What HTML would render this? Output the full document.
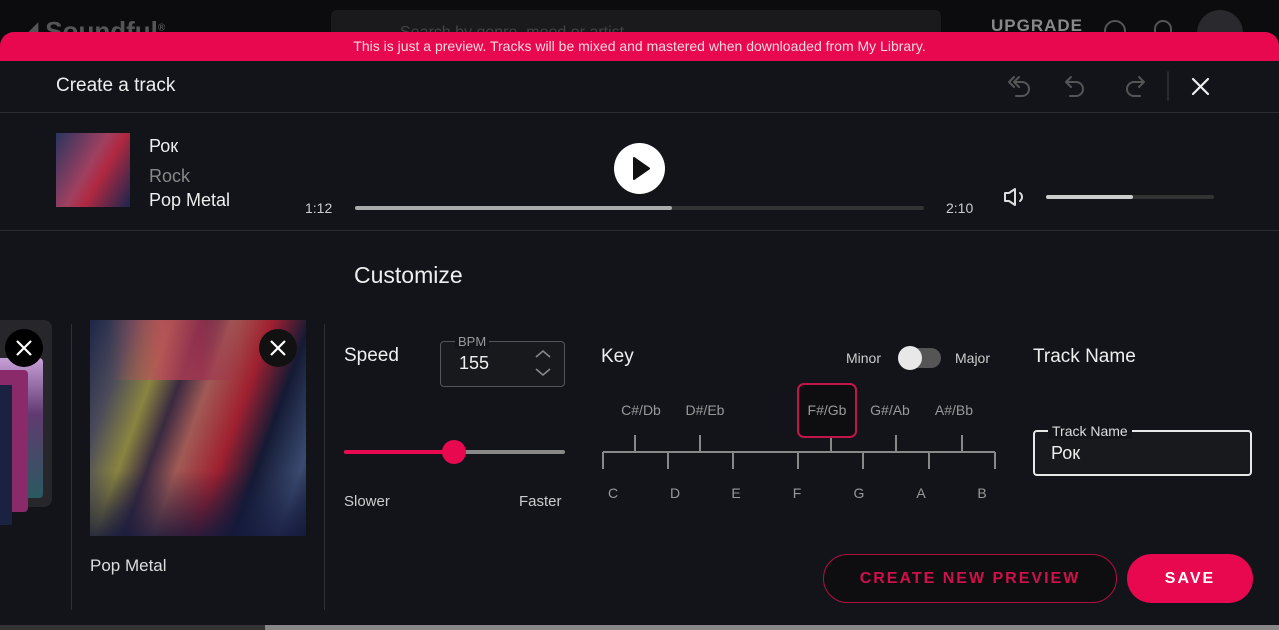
<!DOCTYPE html>
<html><head><meta charset="utf-8"><style>
*{margin:0;padding:0;box-sizing:border-box}
html,body{width:1279px;height:630px;overflow:hidden}
body{background:#0c0c0f;font-family:"Liberation Sans",sans-serif;position:relative;color:#fff}
.a{position:absolute}
</style></head><body>
<div class="a" style="left:18px;top:16px;font-size:26px;font-weight:bold;color:#555;">&#9698; Soundful<sup style="font-size:10px">®</sup></div>
<div class="a" style="left:331px;top:10px;width:610px;height:40px;background:#1a1a1d;border-radius:6px"></div>
<div class="a" style="left:400px;top:24px;font-size:16px;color:#444">Search by genre, mood or artist</div>
<div class="a" style="left:991px;top:16px;font-size:17px;font-weight:bold;color:#888;letter-spacing:1px">UPGRADE</div>
<div class="a" style="left:1104px;top:20px;width:22px;height:22px;border-radius:50%;border:2px solid #555"></div>
<div class="a" style="left:1154px;top:20px;width:18px;height:20px;border-radius:9px 9px 2px 2px;border:2px solid #555"></div>
<div class="a" style="left:1197px;top:10px;width:46px;height:46px;border-radius:50%;background:#2a2a2e"></div>
<div class="a" style="left:0;top:32px;width:1279px;height:600px;background:#131419;border-radius:14px 14px 0 0;overflow:hidden">
  <div class="a" style="left:0;top:0;width:1279px;height:29px;background:#e8084f;text-align:center;font-size:14px;line-height:28px;color:#fbd7e2">This is just a preview. Tracks will be mixed and mastered when downloaded from My Library.</div>
</div>
<div class="a" style="left:56px;top:75px;font-size:19px;color:#eee">Create a track</div>
<svg class="a" style="left:1000px;top:70px" width="220" height="32" viewBox="0 0 220 32" fill="none" stroke-linecap="round" stroke-linejoin="round">
 <g stroke="#555" stroke-width="2">
  <path d="M14 7l-5 5 5 5M19 7l-5 5 5 5M14 12h8a7 7 0 010 14h-6"/>
  <path d="M71 7l-5 5 5 5M66 12h10a7 7 0 010 14h-6"/>
  <path d="M139 7l5 5-5 5M144 12h-10a7 7 0 000 14h6"/>
 </g>
 <path d="M168 2v28" stroke="#333" stroke-width="1.5"/>
 <path d="M193 9l15 15M208 9l-15 15" stroke="#eee" stroke-width="2.2"/>
</svg>
<div class="a" style="left:0;top:112px;width:1279px;height:1px;background:#2a2b30"></div>
<div class="a" style="left:0;top:230px;width:1279px;height:1px;background:#2a2b30"></div>
<div class="a" style="left:56px;top:133px;width:74px;height:74px;background:linear-gradient(120deg,#2a3560,#a04060 45%,#b02840 60%,#1a2650)"></div>
<div class="a" style="left:149px;top:136px;font-size:18px;color:#eee">Рок</div>
<div class="a" style="left:149px;top:166px;font-size:18px;color:#888">Rock</div>
<div class="a" style="left:149px;top:190px;font-size:18px;color:#eee">Pop Metal</div>
<div class="a" style="left:614px;top:143px;width:51px;height:51px;border-radius:50%;background:#fff"></div>
<svg class="a" style="left:614px;top:143px" width="51" height="51"><path d="M20 15l15 10.5-15 10.5z" fill="#111" stroke="#111" stroke-width="2" stroke-linejoin="round"/></svg>
<div class="a" style="left:305px;top:200px;font-size:14px;color:#ccc">1:12</div>
<div class="a" style="left:355px;top:206px;width:569px;height:4px;background:#333;border-radius:2px"></div>
<div class="a" style="left:355px;top:206px;width:317px;height:4px;background:#aaa;border-radius:2px"></div>
<div class="a" style="left:946px;top:200px;font-size:14px;color:#ccc">2:10</div>
<svg class="a" style="left:1003px;top:186px" width="26" height="22" fill="none" stroke="#ddd" stroke-width="2" stroke-linejoin="round"><path d="M2 7h4l6-4v16l-6-4H2z"/><path d="M17 7a5 5 0 010 8" stroke-linecap="round"/></svg>
<div class="a" style="left:1046px;top:195px;width:168px;height:4px;background:#333;border-radius:2px"></div>
<div class="a" style="left:1046px;top:195px;width:87px;height:4px;background:#ccc;border-radius:2px"></div>
<div class="a" style="left:354px;top:262px;font-size:23px;color:#eee">Customize</div>
<div class="a" style="left:-20px;top:320px;width:72px;height:187px;background:#26262b;border-radius:8px"></div>
<div class="a" style="left:-10px;top:358px;width:53px;height:140px;background:linear-gradient(180deg,#c8a0d8,#603a70 40%,#2a5a60);border-radius:4px"></div>
<div class="a" style="left:-10px;top:370px;width:38px;height:142px;background:#8a2a6a;border-radius:4px"></div>
<div class="a" style="left:-10px;top:385px;width:22px;height:140px;background:#1b2140"></div>
<div class="a" style="left:5px;top:329px;width:38px;height:38px;border-radius:50%;background:#000"></div>
<svg class="a" style="left:5px;top:329px" width="38" height="38"><path d="M12 12l14 14M26 12l-14 14" stroke="#fff" stroke-width="2.2"/></svg>
<div class="a" style="left:71px;top:324px;width:1px;height:286px;background:#2e2f34"></div>
<div class="a" style="left:90px;top:320px;width:216px;height:216px;overflow:hidden;background:linear-gradient(110deg,#1e2548 0%,#4a4a5a 15%,#8a8440 28%,#3a2a40 38%,#a05a55 48%,#a02030 62%,#141a34 75%,#3a4a70 90%,#1e2440)">
 <div class="a" style="left:0;top:150px;width:216px;height:66px;background:linear-gradient(180deg,transparent,rgba(20,25,60,.8))"></div>
 <div class="a" style="left:20px;top:0;width:130px;height:60px;background:linear-gradient(90deg,transparent,#c04a5a 40%,#a03050 70%,transparent);opacity:.8"></div>
</div>
<div class="a" style="left:259px;top:329px;width:38px;height:38px;border-radius:50%;background:#111"></div>
<svg class="a" style="left:259px;top:329px" width="38" height="38"><path d="M12 12l14 14M26 12l-14 14" stroke="#fff" stroke-width="2.2"/></svg>
<div class="a" style="left:90px;top:556px;font-size:17px;color:#ddd">Pop Metal</div>
<div class="a" style="left:324px;top:324px;width:1px;height:286px;background:#2e2f34"></div>
<div class="a" style="left:344px;top:345px;font-size:19px;color:#eee">Speed</div>
<div class="a" style="left:440px;top:341px;width:125px;height:46px;border:1px solid #555;border-radius:4px;background:#18191d"></div>
<div class="a" style="left:455px;top:334px;padding:0 3px;font-size:13px;color:#999;background:#131419">BPM</div>
<div class="a" style="left:459px;top:353px;font-size:18px;color:#eee">155</div>
<svg class="a" style="left:532px;top:346px" width="22" height="34" fill="none" stroke="#888" stroke-width="1.6"><path d="M4 11l7-6 7 6M4 23l7 6 7-6"/></svg>
<div class="a" style="left:344px;top:450px;width:221px;height:4px;background:#888;border-radius:2px"></div>
<div class="a" style="left:344px;top:450px;width:110px;height:4px;background:#e8084f;border-radius:2px"></div>
<div class="a" style="left:442px;top:440px;width:24px;height:24px;border-radius:50%;background:#e8084f"></div>
<div class="a" style="left:344px;top:493px;font-size:15px;color:#ccc">Slower</div>
<div class="a" style="left:519px;top:493px;font-size:15px;color:#ccc">Faster</div>
<div class="a" style="left:601px;top:346px;font-size:19px;color:#eee">Key</div>
<div class="a" style="left:846px;top:350px;font-size:14px;color:#ccc">Minor</div>
<div class="a" style="left:898px;top:348px;width:43px;height:20px;border-radius:10px;background:#555"></div>
<div class="a" style="left:898px;top:346px;width:24px;height:24px;border-radius:50%;background:#e8e8e8"></div>
<div class="a" style="left:955px;top:350px;font-size:14px;color:#ccc">Major</div>
<div class="a" style="left:797px;top:383px;width:60px;height:55px;border:2px solid #c0164a;border-radius:7px;background:#0e0e11"></div>
<svg class="a" style="left:590px;top:390px" width="420" height="120" font-family="Liberation Sans,sans-serif" font-size="14" fill="#999" text-anchor="middle">
 <g stroke="#888" stroke-width="2" fill="none">
  <path d="M13 62h392"/>
  <path d="M13 62v17M78 62v17M143 62v17M208 62v17M273 62v17M339 62v17M405 62v17"/>
  <path d="M45 62v-17M110 62v-17M241 62v-14M306 62v-17M372 62v-17"/>
 </g>
 <text x="51" y="25">C#/Db</text><text x="115" y="25">D#/Eb</text><text x="237" y="25">F#/Gb</text><text x="300" y="25">G#/Ab</text><text x="364" y="25">A#/Bb</text>
 <text x="23" y="108">C</text><text x="85" y="108">D</text><text x="146" y="108">E</text><text x="207" y="108">F</text><text x="269" y="108">G</text><text x="331" y="108">A</text><text x="392" y="108">B</text>
</svg>
<div class="a" style="left:1033px;top:346px;font-size:19px;color:#eee">Track Name</div>
<div class="a" style="left:1033px;top:430px;width:219px;height:46px;border:2px solid #e8e8e8;border-radius:4px;background:#18191d"></div>
<div class="a" style="left:1048px;top:423px;padding:0 4px;font-size:14px;color:#ddd;background:#131419">Track Name</div>
<div class="a" style="left:1051px;top:443px;font-size:18px;color:#eee">Рок</div>
<div class="a" style="left:823px;top:554px;width:294px;height:49px;border:1.5px solid #b01040;border-radius:25px;background:#0e0e11;text-align:center;line-height:47px;font-size:16px;font-weight:bold;letter-spacing:2px;color:#d0104a">CREATE NEW PREVIEW</div>
<div class="a" style="left:1127px;top:554px;width:126px;height:49px;border-radius:25px;background:#e8084f;text-align:center;line-height:49px;font-size:16px;font-weight:bold;letter-spacing:2px;color:#fff">SAVE</div>
<div class="a" style="left:0;top:625px;width:1279px;height:5px;background:#333"></div>
<div class="a" style="left:265px;top:625px;width:1014px;height:5px;background:#888"></div>
</body></html>
